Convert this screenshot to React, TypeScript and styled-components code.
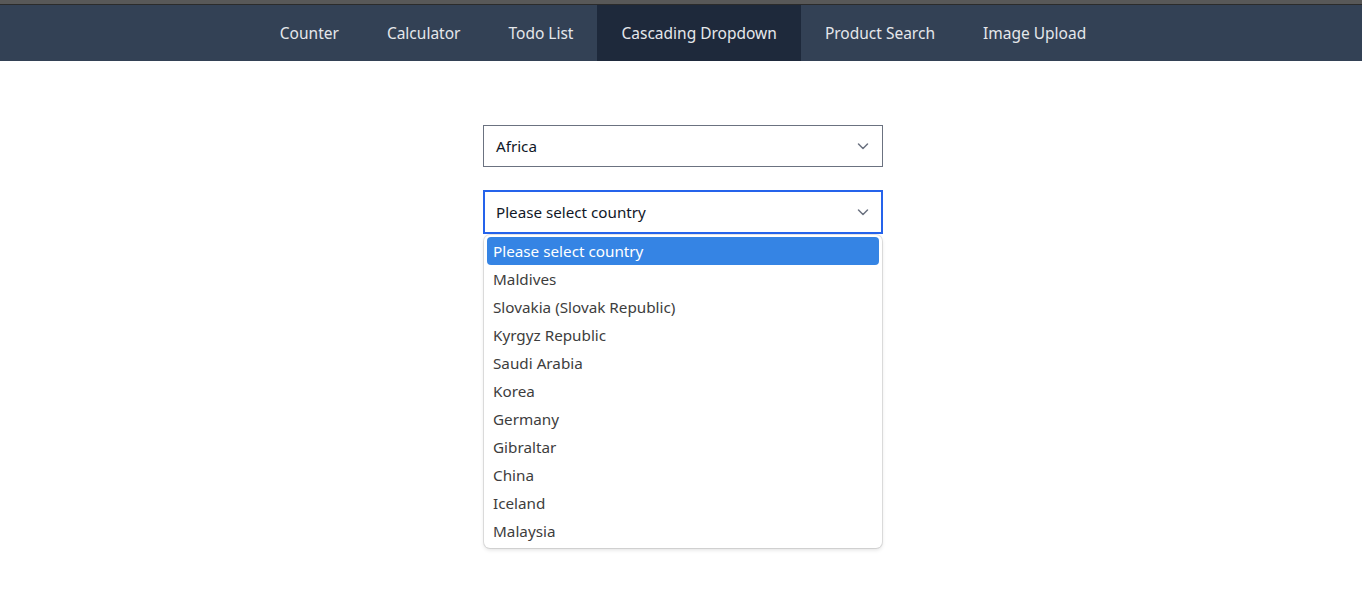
import React from "react";
import styled, { createGlobalStyle } from "styled-components";

const Global = createGlobalStyle`
  html, body { margin: 0; padding: 0; background: #ffffff; }
  body { font-family: "Noto Sans", "DejaVu Sans", sans-serif; }
`;

const Page = styled.div`
  min-height: 613px;
  display: flex;
  flex-direction: column;
`;

const TopStrip = styled.div`
  height: 4px;
  background: #585858;
  border-bottom: 1px solid #2b2b2b;
`;

const Nav = styled.nav`
  height: 56px;
  background: #334155;
  display: flex;
  justify-content: center;
  align-items: stretch;
  padding-left: 4px;
`;

const NavItem = styled.a<{ $active?: boolean }>`
  display: flex;
  align-items: center;
  padding: 0 24px;
  color: #e5e7eb;
  font-size: 15.5px;
  text-decoration: none;
  background: ${(p) => (p.$active ? "#1e293b" : "transparent")};
`;

const Main = styled.main`
  flex: 1;
  display: flex;
  flex-direction: column;
  align-items: center;
  padding-top: 64px;
  padding-left: 4px;
  gap: 23px;
`;

const Field = styled.div`
  position: relative;
  width: 400px;
`;

const SelectBox = styled.div<{ $focused?: boolean }>`
  box-sizing: border-box;
  width: 400px;
  height: ${(p) => (p.$focused ? "44px" : "42px")};
  border: ${(p) => (p.$focused ? "2px solid #2563eb" : "1px solid #6b7280")};
  padding: 0 ${(p) => (p.$focused ? "11px" : "12px")};
  display: flex;
  align-items: center;
  justify-content: space-between;
  font-size: 15.2px;
  color: #111827;
  background: #fff;
`;

const Chevron = () => (
  <svg width="14" height="14" viewBox="0 0 14 14" fill="none">
    <path d="M2.5 5l4.5 4.5L11.5 5" stroke="#6b7280" strokeWidth="1.5" strokeLinecap="round" strokeLinejoin="round" />
  </svg>
);

const Popup = styled.ul`
  position: absolute;
  z-index: 10;
  top: 45px;
  left: 1px;
  right: 1px;
  margin: 0;
  padding: 2px 3px 3px;
  list-style: none;
  background: #fff;
  border-radius: 6px;
  box-shadow: 0 0 0 1px rgba(0, 0, 0, 0.1), 0 2px 4px rgba(0, 0, 0, 0.12);
  font-family: "Noto Sans", sans-serif;
`;

const Option = styled.li<{ $selected?: boolean }>`
  height: 28px;
  display: flex;
  align-items: center;
  padding: 0 6px;
  font-size: 15.25px;
  border-radius: 4px;
  color: ${(p) => (p.$selected ? "#ffffff" : "#3d3d3d")};
  background: ${(p) => (p.$selected ? "#3584e4" : "transparent")};
`;

const navItems = [
  "Counter",
  "Calculator",
  "Todo List",
  "Cascading Dropdown",
  "Product Search",
  "Image Upload",
];

const countries = [
  "Please select country",
  "Maldives",
  "Slovakia (Slovak Republic)",
  "Kyrgyz Republic",
  "Saudi Arabia",
  "Korea",
  "Germany",
  "Gibraltar",
  "China",
  "Iceland",
  "Malaysia",
];

export default function App() {
  return (
    <Page>
      <Global />
      <TopStrip />
      <Nav>
        {navItems.map((n) => (
          <NavItem key={n} $active={n === "Cascading Dropdown"}>
            {n}
          </NavItem>
        ))}
      </Nav>
      <Main>
        <Field>
          <SelectBox>
            <span>Africa</span>
            <Chevron />
          </SelectBox>
        </Field>
        <Field>
          <SelectBox $focused>
            <span>Please select country</span>
            <Chevron />
          </SelectBox>
          <Popup>
            {countries.map((c, i) => (
              <Option key={c} $selected={i === 0}>
                {c}
              </Option>
            ))}
          </Popup>
        </Field>
      </Main>
    </Page>
  );
}
